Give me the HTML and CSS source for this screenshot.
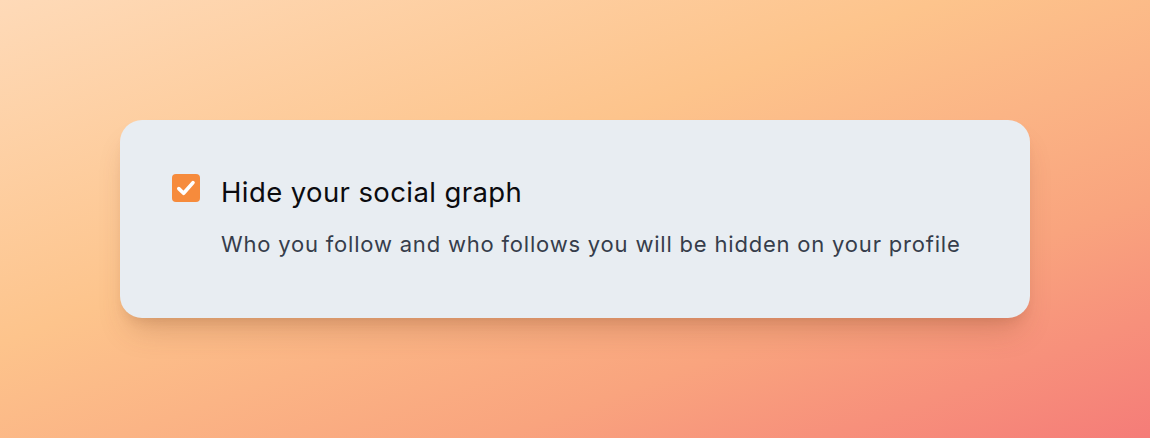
FILE: index.html
```html
<!DOCTYPE html>
<html lang="en">
<head>
<meta charset="utf-8">
<link rel="stylesheet" href="styles.css">
</head>
<body>
<main class="stage">
  <section class="card">
    <label class="option">
      <span class="checkbox" aria-hidden="true">
        <svg viewBox="0 0 28 28" width="28" height="28">
          <path d="M6.8 14.6 L11.6 19.3 L21 8.6" fill="none" stroke="#fff" stroke-width="3.6" stroke-linecap="round" stroke-linejoin="round"/>
        </svg>
      </span>
      <span class="text">
        <span class="title">Hide your social graph</span>
        <span class="desc">Who you follow and who follows you will be hidden on your profile</span>
      </span>
    </label>
  </section>
</main>
</body>
</html>
```
FILE: styles.css
```css
html, body {
  margin: 0;
  padding: 0;
}
body {
  width: 1150px;
  height: 438px;
  overflow: hidden;
  font-family: Inter, "Noto Sans", sans-serif;
}
.stage {
  box-sizing: border-box;
  width: 1150px;
  height: 438px;
  padding: 120px 120px;
  background: linear-gradient(160deg, #fedab8 0%, #fdc48c 40%, #f9a47e 72%, #f57c78 100%);
}
.card {
  box-sizing: border-box;
  width: 910px;
  height: 198px;
  background: #e8edf2;
  border-radius: 22px;
  padding: 54px 52px;
  box-shadow: 0 20px 30px -10px rgba(120, 60, 30, 0.25), 0 8px 12px -6px rgba(120, 60, 30, 0.15);
}
.option {
  display: flex;
  gap: 21px;
  align-items: flex-start;
}
.checkbox {
  flex: none;
  width: 28px;
  height: 28px;
  border-radius: 4px;
  background: #f68b3c;
  display: block;
}
.checkbox svg {
  display: block;
}
.text {
  display: flex;
  flex-direction: column;
  gap: 21px;
  margin-top: 1px;
}
.title {
  font-size: 27.5px;
  line-height: 34px;
  letter-spacing: 0.4px;
  color: #0b0b0f;
  font-weight: 400;
}
.desc {
  font-size: 22px;
  line-height: 28px;
  letter-spacing: 0.8px;
  color: #363d4b;
}
```
